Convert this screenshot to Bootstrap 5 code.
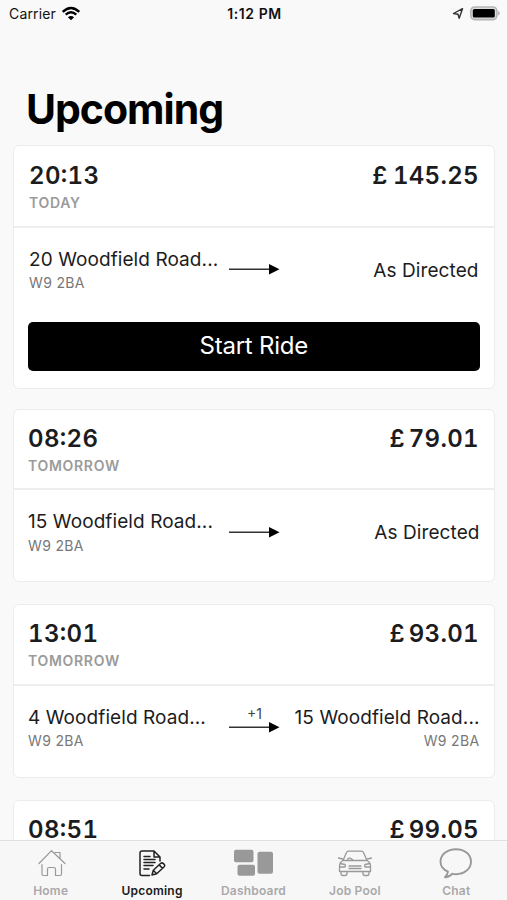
<!DOCTYPE html>
<html lang="en">
<head>
<meta charset="utf-8">
<meta name="viewport" content="width=device-width, initial-scale=1">
<title>Upcoming</title>
<link href="https://cdn.jsdelivr.net/npm/bootstrap@5.3.0/dist/css/bootstrap.min.css" rel="stylesheet">
<style>
body{font-family:Inter,"Liberation Sans",sans-serif;background:#f9f9f9;color:#1c1c1e;height:900px;overflow:hidden}
.screen{height:900px}
.status{height:28px;padding:0 7px 0 9px;font-size:14px;line-height:28px;color:#111}
.status>div{flex:1 1 0}
.status .carrier{letter-spacing:.15px}
.clock{letter-spacing:.6px;white-space:nowrap}
.title{font-size:41px;line-height:50px;letter-spacing:-1px;margin:56px 0 11px 26px;color:#000}
.rides{padding:0 12.5px 0 13px}
.ride{border:1.5px solid #ececec;border-radius:6px;height:173.5px;margin-bottom:22px}
.ride.active{height:244px;margin-bottom:19.5px}
.ride-head{height:80.500px;padding:14px 15px 0 14px;border-bottom:2px solid #eee}
.active .ride-head{height:81.500px;padding:15px 15px 0 15px}
.hour,.fare{font-size:24px;line-height:30px;font-variant-numeric:tabular-nums;white-space:nowrap}
.hour{letter-spacing:.35px;font-feature-settings:"case"}
.fare{letter-spacing:.3px;margin-right:-.3px;word-spacing:-3px}
.active .fare{word-spacing:-1.5px}
.day{font-size:14px;line-height:18px;color:#9b9b9b;letter-spacing:.7px;margin-top:3px}
.ride-body{height:89px;padding:19px 14px 0 14px}
.active .ride-body{height:90px;padding:19px 15px 0 15px}
.place{font-size:19px;line-height:26px;letter-spacing:.08px;white-space:nowrap}
.code{font-size:14px;line-height:20px;color:#777;letter-spacing:.35px;margin-top:.5px}
.leg-from{width:201px}
.active .leg-from{width:200px}
.leg-via{width:51px;height:28.500px;font-size:14px;line-height:14px;color:#444}
.directed{margin-top:11px}
.start{margin:4px 13.5px 0 13.5px;height:49px;font-size:24px;line-height:30px;letter-spacing:-.25px;border-radius:5px;background:#000}
.tabs{height:60px;background:#f7f7f7;border-top:1.5px solid #e0e0e0}
.tab{flex:1 1 0;color:#a9a9a9;font-size:12px;line-height:16px;font-weight:600;padding-top:4px;letter-spacing:.2px}
.tab.current{color:#1a1a1a}
.tab svg{display:block;margin-bottom:2px;color:#999}
.tab.current svg{color:#222}
</style>
</head>
<body>
<div class="screen d-flex flex-column overflow-hidden">
  <header class="status d-flex align-items-center flex-shrink-0">
    <div class="carrier d-flex align-items-center">Carrier
      <svg class="ms-1" width="22" height="16" viewBox="-1 0 22 16" fill="none" stroke="#000" stroke-width="2.4"><path d="M1.700 5.800Q10-2 18.300 5.800M4.700 8.700Q10 4 15.300 8.700"/><path d="M10 14.300L6.900 11.200Q10 8.800 13.100 11.200Z" fill="#000" stroke="none"/></svg>
    </div>
    <div class="clock text-center fw-semibold">1:12 PM</div>
    <div class="d-flex justify-content-end align-items-center">
      <svg width="48" height="16" viewBox="0 0 48 16"><path d="M1.500 7.500L10.500 2.700L7.200 12.300L6 8.300Z" fill="none" stroke="#333" stroke-width="1.400" stroke-linejoin="round"/><rect x="18.800" y="1" width="26" height="12.600" rx="3.800" fill="#ddd" stroke="#b5b5b5" stroke-width="1.600"/><rect x="20.800" y="3" width="22" height="8.600" rx="1.500" fill="#000"/><path d="M46 4.800Q49.500 7.300 46 9.800Z" fill="#b5b5b5"/></svg>
    </div>
  </header>
  <h1 class="title fw-bold flex-shrink-0">Upcoming</h1>

  <main class="rides flex-grow-1 overflow-hidden">
    <article class="ride active bg-white">
      <div class="ride-head d-flex justify-content-between">
        <div><div class="hour fw-semibold">20:13</div><div class="day fw-semibold">TODAY</div></div>
        <div class="fare fw-semibold">£ 145.25</div>
      </div>
      <div class="ride-body d-flex">
        <div class="leg-from"><div class="place">20 Woodfield Road...</div><div class="code">W9 2BA</div></div>
        <div class="leg-via d-flex flex-column align-items-center justify-content-end"><svg width="51" height="12" viewBox="0 0 51 12"><path d="M0 6.200H42" stroke="#333" stroke-width="1.500"/><path d="M40 1L50.500 6.200L40 11.400Z" fill="#000"/></svg></div>
        <div class="place directed flex-grow-1 text-end">As Directed</div>
      </div>
      <div class="d-grid">
        <button class="start btn btn-dark border-0 p-0 text-white" type="button">Start Ride</button>
      </div>
    </article>

    <article class="ride bg-white">
      <div class="ride-head d-flex justify-content-between">
        <div><div class="hour fw-semibold">08:26</div><div class="day fw-semibold">TOMORROW</div></div>
        <div class="fare fw-semibold">£ 79.01</div>
      </div>
      <div class="ride-body d-flex">
        <div class="leg-from"><div class="place">15 Woodfield Road...</div><div class="code">W9 2BA</div></div>
        <div class="leg-via d-flex flex-column align-items-center justify-content-end"><svg width="51" height="12" viewBox="0 0 51 12"><path d="M0 6.200H42" stroke="#333" stroke-width="1.500"/><path d="M40 1L50.500 6.200L40 11.400Z" fill="#000"/></svg></div>
        <div class="place directed flex-grow-1 text-end">As Directed</div>
      </div>
    </article>

    <article class="ride bg-white">
      <div class="ride-head d-flex justify-content-between">
        <div><div class="hour fw-semibold">13:01</div><div class="day fw-semibold">TOMORROW</div></div>
        <div class="fare fw-semibold">£ 93.01</div>
      </div>
      <div class="ride-body d-flex">
        <div class="leg-from"><div class="place">4 Woodfield Road...</div><div class="code">W9 2BA</div></div>
        <div class="leg-via d-flex flex-column align-items-center justify-content-end"><span>+1</span><svg width="51" height="12" viewBox="0 0 51 12"><path d="M0 6.200H42" stroke="#333" stroke-width="1.500"/><path d="M40 1L50.500 6.200L40 11.400Z" fill="#000"/></svg></div>
        <div class="flex-grow-1 text-end"><div class="place">15 Woodfield Road...</div><div class="code">W9 2BA</div></div>
      </div>
    </article>

    <article class="ride bg-white">
      <div class="ride-head d-flex justify-content-between">
        <div class="hour fw-semibold">08:51</div>
        <div class="fare fw-semibold">£ 99.05</div>
      </div>
    </article>
  </main>

  <nav class="tabs d-flex flex-shrink-0">
    <div class="tab d-flex flex-column align-items-center">
      <svg width="36" height="36" viewBox="-.5 0 36 36" fill="none" stroke="currentColor" stroke-width="1.200" stroke-linejoin="round" stroke-linecap="round"><path d="M5.500 18.500L18 5.700L31.500 18.500M21.500 7.500H26.500V13.500M8.500 19.500V29Q8.500 30.500 10 30.500H14V24Q14 22.500 15.500 22.500H20.500Q22 22.500 22 24V30.500H26.500Q28 30.500 28 29V19.500"/></svg>Home
    </div>
    <div class="tab current d-flex flex-column align-items-center">
      <svg width="36" height="36" viewBox="-.5 0 36 36" fill="none" stroke="currentColor" stroke-width="1.500" stroke-linejoin="round" stroke-linecap="round"><path d="M15 30.500H7.500Q5.500 30.500 5.500 28.500V8Q5.500 6 7.500 6H19.500L25.500 12V16M19.500 6V12H25.500"/><path d="M9.500 11.500H15.500M9.500 14.500H20.500M9.500 17.500H20.500M9.500 20.500H18.500M9.500 24H14.500"/><path d="M17.500 30L18.800 25.300L26.300 18.300Q27.500 17.300 29 18.600Q31 20.300 29.700 21.700L22.200 28.700ZM18.800 25.300L22.200 28.700M24.700 19.900L28 23.200"/></svg>Upcoming
    </div>
    <div class="tab d-flex flex-column align-items-center">
      <svg width="42" height="36" viewBox="0 0.700 42 36" fill="#999"><rect x="1" y="5.500" width="19.500" height="12.500" rx="2"/><rect x="4.500" y="20.500" width="17.500" height="11" rx="2"/><rect x="24.500" y="7.500" width="15.500" height="22" rx="2"/></svg>Dashboard
    </div>
    <div class="tab d-flex flex-column align-items-center">
      <svg width="36" height="36" viewBox="0 0 36 36" fill="none" stroke="currentColor" stroke-width="1.300" stroke-linejoin="round" stroke-linecap="round"><path d="M6 15.500L9.500 7.500Q10 6.200 11.500 6.200H24.500Q26 6.200 26.500 7.500L30 15.500ZM6 15.500Q2.500 17.500 2.500 21V26.500H33.500V21Q33.500 17.500 30 15.500M1.500 13L5.500 14M34.500 13L30.500 14M4 26.500V28.500Q4 30.500 6 30.500H8Q10 30.500 10 28.500V26.500M26 26.500V28.500Q26 30.500 28 30.500H30Q32 30.500 32 28.500V26.500M12 23.500H24M12 21H24M3 18.500L8 19.500Q9 22 7.500 22H3M33 18.500L28 19.500Q27 22 28.500 22H33M10.500 15Q11 12.500 13.500 13.200L16 15"/></svg>Job Pool
    </div>
    <div class="tab d-flex flex-column align-items-center">
      <svg width="36" height="36" viewBox="0.500 0.300 36 36" fill="none" stroke="currentColor" stroke-width="1.900" stroke-linejoin="round"><path d="M10.500 27Q3 23.500 3 17C3 10 9.500 4.500 18.500 4.500S33.500 10 33.500 17S27 29.500 18.500 29.500Q16.500 29.500 15 29.100Q11.500 32.500 7.500 32.500Q10 30 10.500 27Z"/></svg>Chat
    </div>
  </nav>
</div>
<script src="https://cdn.jsdelivr.net/npm/bootstrap@5.3.0/dist/js/bootstrap.bundle.min.js"></script>
</body>
</html>
